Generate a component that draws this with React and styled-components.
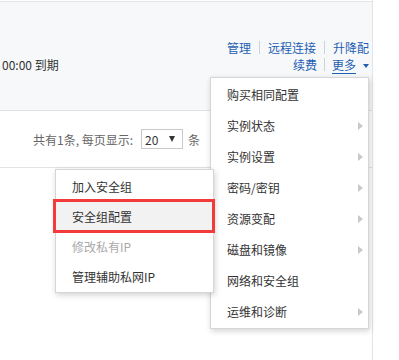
import styled, { createGlobalStyle } from "styled-components";

const GlobalStyle = createGlobalStyle`
  html, body {
    margin: 0;
    padding: 0;
    background: #fff;
    font-family: "Noto Sans CJK SC", "Liberation Sans", sans-serif;
    font-size: 12px;
    color: #333;
  }
`;

const Page = styled.div`
  position: relative;
  width: 399px;
  height: 360px;
  overflow: hidden;
`;

const Panel = styled.div`
  width: 373px;
  height: 360px;
  padding-top: 1px;
  box-sizing: border-box;
  border-right: 1px solid #e1e5ea;
`;

const InstanceRow = styled.div`
  height: 110px;
  background: #f7f8fa;
  border-top: 1px solid #e2e5e9;
  border-bottom: 1px solid #e2e2e2;
  display: flex;
  align-items: flex-start;
  justify-content: space-between;
  padding: 37px 3px 0 2px;
  box-sizing: border-box;
`;

const Expire = styled.div`
  margin-top: 17px;
  line-height: 17px;
  white-space: nowrap;
`;

const Actions = styled.div`
  display: flex;
  flex-direction: column;
  align-items: flex-end;
`;

const ActionLine = styled.div`
  display: flex;
  align-items: center;
  height: 17px;
  line-height: 17px;
`;

const Link = styled.span`
  color: #1f5fb3;
  white-space: nowrap;
  text-decoration: ${(p) => (p.$underline ? "underline" : "none")};
  text-underline-offset: 3px;
`;

const Sep = styled.span`
  width: 1px;
  height: 13px;
  background: #cfd3d8;
  margin: 0 ${(p) => p.$gap || 8}px;
`;

const Caret = styled.span`
  width: 0;
  height: 0;
  margin-left: 7px;
  margin-top: 2px;
  border-left: 3px solid transparent;
  border-right: 3px solid transparent;
  border-top: 4px solid #1f5fb3;
`;

const Pager = styled.div`
  height: 56px;
  border-bottom: 1px solid #e3e3e3;
  display: flex;
  align-items: center;
  padding-left: 33px;
  color: #666;
  white-space: nowrap;
`;

const Select = styled.div`
  width: 42px;
  height: 20px;
  box-sizing: border-box;
  border: 1px solid #c9c9c9;
  margin: 0 5px 0 8px;
  display: flex;
  align-items: center;
  justify-content: space-between;
  padding: 0 7px 0 3px;
  color: #333;
`;

const SelectArrow = styled.span`
  width: 0;
  height: 0;
  border-left: 3px solid transparent;
  border-right: 3px solid transparent;
  border-top: 6px solid #333;
`;

const Menu = styled.ul`
  position: absolute;
  left: ${(p) => p.$left}px;
  top: ${(p) => p.$top}px;
  width: ${(p) => p.$width}px;
  margin: 0;
  padding: 1px 0;
  list-style: none;
  background: #fff;
  border: 1px solid #d6d6d6;
  box-shadow: 1px 2px 6px rgba(0, 0, 0, 0.18);
  box-sizing: border-box;
  z-index: ${(p) => p.$z};
`;

const Item = styled.li`
  position: relative;
  height: ${(p) => p.$h}px;
  display: flex;
  align-items: center;
  padding: 0 5px 0 16px;
  white-space: nowrap;
  color: ${(p) => (p.$disabled ? "#aaa" : "#333")};
  background: ${(p) => (p.$active ? "#f2f2f2" : "transparent")};

  ${(p) =>
    p.$active &&
    `
    &::after {
      content: "";
      position: absolute;
      left: -3px;
      right: -2px;
      top: -2px;
      bottom: -2px;
      border: 3px solid #f33b3b;
    }
  `}
`;

const SubArrow = styled.span`
  margin-left: auto;
  width: 0;
  height: 0;
  border-top: 4px solid transparent;
  border-bottom: 4px solid transparent;
  border-left: 5px solid #c8c8c8;
`;

const mainItems = [
  { label: "购买相同配置" },
  { label: "实例状态", sub: true },
  { label: "实例设置", sub: true },
  { label: "密码/密钥", sub: true },
  { label: "资源变配", sub: true },
  { label: "磁盘和镜像", sub: true },
  { label: "网络和安全组" },
  { label: "运维和诊断", sub: true },
];

const subItems = [
  { label: "加入安全组" },
  { label: "安全组配置", active: true },
  { label: "修改私有IP", disabled: true },
  { label: "管理辅助私网IP" },
];

export default function App() {
  return (
    <Page>
      <GlobalStyle />
      <Panel>
        <InstanceRow>
          <Expire>00:00 到期</Expire>
          <Actions>
            <ActionLine>
              <Link>管理</Link>
              <Sep />
              <Link>远程连接</Link>
              <Sep />
              <Link>升降配</Link>
            </ActionLine>
            <ActionLine>
              <Link>续费</Link>
              <Sep $gap={7} />
              <Link $underline>更多</Link>
              <Caret />
            </ActionLine>
          </Actions>
        </InstanceRow>
        <Pager>
          共有1条, 每页显示:
          <Select>
            20
            <SelectArrow />
          </Select>
          条
        </Pager>
      </Panel>

      <Menu $left={210} $top={77} $width={159} $z={1}>
        {mainItems.map((it) => (
          <Item key={it.label} $h={31}>
            {it.label}
            {it.sub && <SubArrow />}
          </Item>
        ))}
      </Menu>

      <Menu $left={55} $top={169} $width={159} $z={2}>
        {subItems.map((it) => (
          <Item key={it.label} $h={30} $active={it.active} $disabled={it.disabled}>
            {it.label}
          </Item>
        ))}
      </Menu>
    </Page>
  );
}
